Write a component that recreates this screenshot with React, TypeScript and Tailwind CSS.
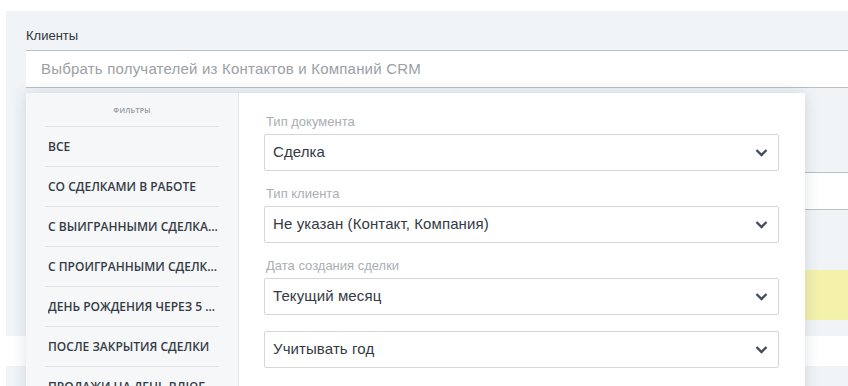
import React from 'react'

const filters = [
  'Все',
  'Со сделками в работе',
  'С выигранными сделками',
  'С проигранными сделками',
  'День рождения через 5 дней',
  'После закрытия сделки',
  'Продажи на день влюбленных',
]

const fields = [
  { label: 'Тип документа', value: 'Сделка' },
  { label: 'Тип клиента', value: 'Не указан (Контакт, Компания)' },
  { label: 'Дата создания сделки', value: 'Текущий месяц' },
  { label: null, value: 'Учитывать год' },
]

function Chevron() {
  return (
    <svg width="13" height="9" viewBox="0 0 13 9" className="shrink-0">
      <polyline points="1.5,2 6.5,7 11.5,2" fill="none" stroke="#464c5a" strokeWidth="2.4" />
    </svg>
  )
}

function Select({ value }: { value: string }) {
  return (
    <div className="flex h-[37px] items-center justify-between rounded-[2px] border border-[#d6d6d6] bg-white pl-[8px] pr-[10px]">
      <span className="text-[15px] tracking-[0.1px] text-[#333a44]">{value}</span>
      <Chevron />
    </div>
  )
}

export default function App() {
  return (
    <div className="relative h-[386px] w-[848px] overflow-hidden bg-white font-['Liberation_Sans',Arial,sans-serif]">
      {/* page behind the dropdown */}
      <div className="mt-[11px] ml-[6px] flex flex-col bg-[#f0f4f7]">
        <div className="flex h-[39px] items-end pb-[5px] pl-[20px] text-[13px] text-[#2f3640]">Клиенты</div>
        <div className="ml-[20px] flex h-[38px] items-center border-y border-[#b6c1ca] bg-white pl-[15px]">
          <span className="text-[15px] tracking-[0.2px] text-[#9aa0a6]">Выбрать получателей из Контактов и Компаний CRM</span>
        </div>
        <div className="h-[84px]" />
        <div className="ml-[20px] h-[38px] border-y border-[#b6c1ca] bg-white" />
        <div className="h-[60px]" />
        <div className="ml-[20px] h-[50px] bg-[#f4f1aa]" />
        <div className="h-[16px]" />
      </div>
      <div className="h-[30px] bg-white" />
      <div className="ml-[6px] h-[30px] bg-[#f0f4f7]" />

      {/* filter dropdown */}
      <div className="absolute left-[26px] top-[93px] flex h-[320px] w-[779px] shadow-[0_0_14px_rgba(40,60,80,0.16)]">
        <div className="w-[213px] shrink-0 border-r border-[#e4e8ec] bg-[#f5f7f9] px-[19px] font-['Open_Sans',sans-serif]">
          <div className="flex h-[33px] items-center justify-center pt-[3px] text-[7px] font-semibold uppercase tracking-[0.3px] text-[#8d939a]">
            Фильтры
          </div>
          {filters.map((f) => (
            <div
              key={f}
              className="flex h-[40px] items-center border-t border-[#dfe3e7] pl-[3px] text-[12px] font-semibold uppercase text-[#363c46]"
            >
              <span className="truncate">{f}</span>
            </div>
          ))}
        </div>
        <div className="flex-1 bg-white pl-[25px] pr-[26px] pt-[22px]">
          {fields.map((f, i) => (
            <div key={i} className="mb-[16px]">
              {f.label && (
                <div className="mb-[5px] pl-[2px] text-[13px] leading-[14px] text-[#a9aeb3]">{f.label}</div>
              )}
              <Select value={f.value} />
            </div>
          ))}
        </div>
      </div>
    </div>
  )
}
